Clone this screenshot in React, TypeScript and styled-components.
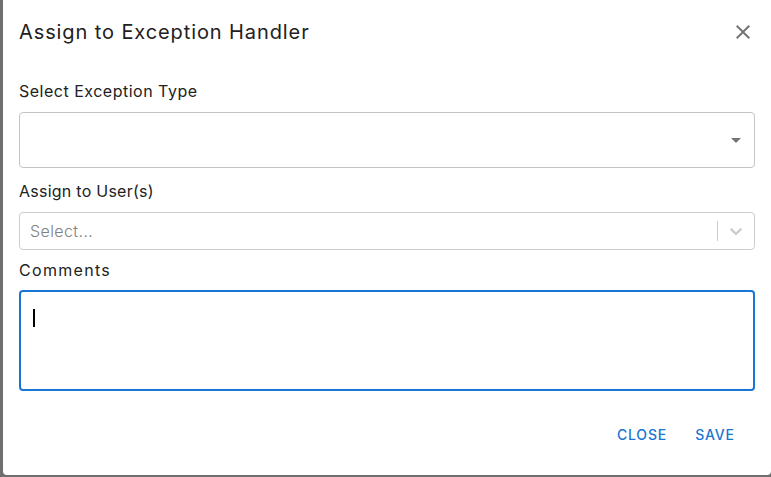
import React from "react";
import styled, { createGlobalStyle } from "styled-components";

const Global = createGlobalStyle`
  html, body { margin: 0; padding: 0; }
  body {
    background: #6f6f6f;
    width: 771px;
    height: 477px;
    overflow: hidden;
    font-family: Inter, "Open Sans", sans-serif;
  }
`;

const Page = styled.div`
  display: flex;
  padding-left: 3px;
  height: 477px;
  box-sizing: border-box;
`;

const Dialog = styled.div`
  width: 768px;
  height: 475px;
  background: #ffffff;
  border-radius: 0 0 4px 4px;
  display: flex;
  flex-direction: column;
  box-sizing: border-box;
`;

const Header = styled.div`
  display: flex;
  align-items: center;
  justify-content: space-between;
  height: 64px;
  padding: 0 16px;
`;

const Title = styled.h2`
  margin: 0;
  font-size: 20px;
  font-weight: 400;
  line-height: 32px;
  color: #212121;
  letter-spacing: 0.9px;
`;

const IconButton = styled.button`
  border: 0;
  background: transparent;
  padding: 0;
  width: 24px;
  height: 24px;
  display: flex;
  color: rgba(0, 0, 0, 0.54);
`;

const Content = styled.div`
  display: flex;
  flex-direction: column;
  padding: 0 16px;
`;

const Label = styled.div<{ $top: number; $bottom: number; $spacing?: number }>`
  font-size: 16px;
  line-height: 24px;
  color: #222222;
  margin-top: ${(p) => p.$top}px;
  margin-bottom: ${(p) => p.$bottom}px;
  letter-spacing: ${(p) => p.$spacing ?? 0.5}px;
`;

const MuiSelect = styled.div`
  height: 56px;
  border: 1px solid #c4c4c4;
  border-radius: 4px;
  box-sizing: border-box;
  display: flex;
  align-items: center;
  justify-content: flex-end;
  padding-right: 6px;
  color: rgba(0, 0, 0, 0.54);
`;

const ReactSelect = styled.div`
  height: 38px;
  border: 1px solid #cccccc;
  border-radius: 4px;
  box-sizing: border-box;
  display: flex;
  align-items: center;
`;

const Placeholder = styled.div`
  flex: 1;
  padding-left: 10px;
  font-size: 16px;
  font-weight: 300;
  color: #808080;
  letter-spacing: 0.4px;
`;

const Separator = styled.span`
  align-self: stretch;
  width: 1px;
  margin: 8px 0;
  background: #cccccc;
`;

const Indicator = styled.div`
  display: flex;
  padding: 8px;
  color: #cccccc;
`;

const TextArea = styled.div`
  height: 101px;
  border: 2px solid #1976d2;
  border-radius: 4px;
  box-sizing: border-box;
  padding: 17px 12px;
`;

const Caret = styled.span`
  display: block;
  width: 2px;
  height: 18px;
  background: #000;
`;

const Actions = styled.div`
  display: flex;
  justify-content: flex-end;
  align-items: center;
  gap: 8px;
  margin-top: 25px;
  padding-right: 24px;
`;

const TextButton = styled.button`
  border: 0;
  background: transparent;
  min-width: 64px;
  height: 36px;
  padding: 6px 8px;
  font-family: Inter, "Open Sans", sans-serif;
  font-size: 14px;
  font-weight: 500;
  letter-spacing: 0.8px;
  color: #1976d2;
  text-transform: uppercase;
`;

export default function App() {
  return (
    <>
      <Global />
      <Page>
        <Dialog>
          <Header>
            <Title>Assign to Exception Handler</Title>
            <IconButton aria-label="close">
              <svg width="24" height="24" viewBox="0 0 24 24" fill="currentColor">
                <path d="M19 6.41 17.59 5 12 10.59 6.41 5 5 6.41 10.59 12 5 17.59 6.41 19 12 13.41 17.59 19 19 17.59 13.41 12z" />
              </svg>
            </IconButton>
          </Header>
          <Content>
            <Label $top={15} $bottom={9} $spacing={0.5}>Select Exception Type</Label>
            <MuiSelect>
              <svg width="24" height="24" viewBox="0 0 24 24" fill="currentColor">
                <path d="M7 10l5 5 5-5z" />
              </svg>
            </MuiSelect>
            <Label $top={11} $bottom={9} $spacing={0.25}>Assign to User(s)</Label>
            <ReactSelect>
              <Placeholder>Select...</Placeholder>
              <Separator />
              <Indicator>
                <svg width="20" height="20" viewBox="0 0 20 20" fill="currentColor">
                  <path d="M4.516 7.548c0.436-0.446 1.043-0.481 1.576 0l3.908 3.747 3.908-3.747c0.533-0.481 1.141-0.446 1.574 0 0.436 0.445 0.408 1.197 0 1.615-0.406 0.418-4.695 4.502-4.695 4.502-0.217 0.223-0.502 0.335-0.787 0.335s-0.57-0.112-0.789-0.335c0 0-4.287-4.084-4.695-4.502s-0.436-1.17 0-1.615z" />
                </svg>
              </Indicator>
            </ReactSelect>
            <Label $top={8} $bottom={8} $spacing={1.3}>Comments</Label>
            <TextArea>
              <Caret />
            </TextArea>
          </Content>
          <Actions>
            <TextButton>Close</TextButton>
            <TextButton>Save</TextButton>
          </Actions>
        </Dialog>
      </Page>
    </>
  );
}
